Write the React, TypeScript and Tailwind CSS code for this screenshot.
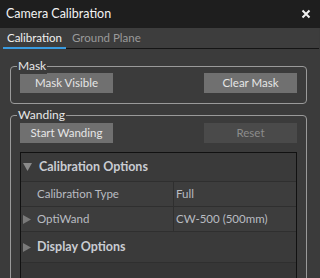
import React from "react";

const font = { fontFamily: 'Lato, "Noto Sans", sans-serif' };

function Btn({ children, disabled }: { children: React.ReactNode; disabled?: boolean }) {
  return (
    <div
      className={
        "w-[93px] h-[20px] flex items-center justify-center text-[11.5px] " +
        (disabled ? "bg-[#4a4a4a] text-[#8c8c8c]" : "bg-[#707070] text-[#e6e6e6]")
      }
    >
      {children}
    </div>
  );
}

function Group({ label, children, className }: { label: string; children: React.ReactNode; className?: string }) {
  return (
    <div className={"relative border border-[#9a9a9a] rounded-[4px] " + (className ?? "")}>
      <div className="absolute left-[6px] top-[-9px] px-[1px] bg-[#3b3b3b] text-[12px] leading-[16px] text-[#e8e8e8]">
        {label}
      </div>
      {children}
    </div>
  );
}

function Tri({ down }: { down?: boolean }) {
  return down ? (
    <svg width="9" height="8" viewBox="0 0 9 8" className="shrink-0">
      <path d="M0 0 H9 L4.5 8 Z" fill="#8a8a8a" />
    </svg>
  ) : (
    <svg width="8" height="9" viewBox="0 0 8 9" className="shrink-0">
      <path d="M0 0 V9 L8 4.5 Z" fill="#7a7a7a" />
    </svg>
  );
}

export default function App() {
  return (
    <div className="w-[320px] h-[278px] bg-[#3b3b3b] overflow-hidden flex flex-col" style={font}>
      <div className="h-[28px] bg-[#1e1e1e] flex items-center justify-between pl-[6px] pr-[9px] shrink-0">
        <span className="text-[12.5px] text-[#f2f2f2]">Camera Calibration</span>
        <svg width="10" height="10" viewBox="0 0 10 10">
          <path d="M1.5 1.5 L8.5 8.5 M8.5 1.5 L1.5 8.5" stroke="#f2f2f2" strokeWidth="2" />
        </svg>
      </div>
      <div className="h-[21px] bg-[#3d3d3d] flex items-stretch shrink-0 mr-[1px]">
        <div className="w-[63px] ml-[3px] border-b-2 border-[#3a9be0] flex items-center justify-center text-[11.5px] text-[#f0f0f0]">
          Calibration
        </div>
        <div className="flex-1 border-b border-[#151515] flex items-center pl-[6px] text-[11.5px] text-[#9a9a9a]">
          Ground Plane
        </div>
      </div>
      <div className="flex flex-col pl-[10px] pr-[13px] pt-[17px] gap-[11px]">
        <Group label="Mask" className="h-[38px] px-[9px] pt-[6px]">
          <div className="flex justify-between">
            <Btn>Mask Visible</Btn>
            <Btn>Clear Mask</Btn>
          </div>
        </Group>
        <Group label="Wanding" className="h-[200px] px-[9px] pt-[7px]">
          <div className="flex justify-between">
            <Btn>Start Wanding</Btn>
            <Btn disabled>Reset</Btn>
          </div>
          <div className="mt-[9px] border border-[#111] bg-[#363636] h-[140px] text-[11.5px]">
            <div className="h-[29px] flex items-center gap-[7px] pl-[2px] bg-[#3a3a3a] border-b border-[#2f2f2f]">
              <Tri down />
              <span className="font-bold text-[12.5px] text-[#c9ccd2]">Calibration Options</span>
            </div>
            <div className="h-[25px] flex bg-[#3d3d3d] border-b border-[#2f2f2f] text-[#b9bcc2]">
              <div className="w-[153px] pl-[16px] flex items-center border-r border-[#2f2f2f]">Calibration Type</div>
              <div className="flex-1 pl-[2px] flex items-center">Full</div>
            </div>
            <div className="h-[25px] flex bg-[#3d3d3d] border-b border-[#2f2f2f] text-[#b9bcc2]">
              <div className="w-[153px] pl-[2px] gap-[6px] flex items-center border-r border-[#2f2f2f]">
                <Tri />
                <span>OptiWand</span>
              </div>
              <div className="flex-1 pl-[2px] flex items-center">CW-500 (500mm)</div>
            </div>
            <div className="h-[31px] flex items-center gap-[6px] pl-[2px] bg-[#3a3a3a] border-b border-[#2f2f2f]">
              <Tri />
              <span className="font-bold text-[12.5px] text-[#c9ccd2]">Display Options</span>
            </div>
          </div>
        </Group>
      </div>
    </div>
  );
}
